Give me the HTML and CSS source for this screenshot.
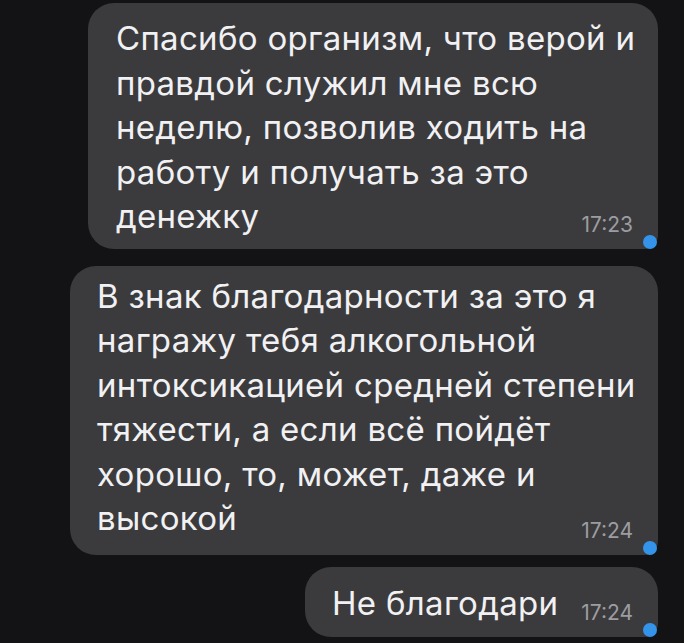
FILE: index.html
```html
<!DOCTYPE html>
<html lang="ru">
<head>
    <meta charset="UTF-8">
    <meta name="viewport" content="width=device-width, initial-scale=1.0">
    <title>Сообщения</title>
    <link rel="stylesheet" href="styles.css">
</head>
<body>
    <div id="chat">
        <div class="bubble first">
            <p class="text">Спасибо организм, что верой и правдой служил мне всю неделю, позволив ходить на работу и получать за это денежку</p>
            <span class="time">17:23</span>
            <span class="dot"></span>
        </div>
        <div class="bubble second">
            <p class="text">В знак благодарности за это я награжу тебя алкогольной интоксикацией средней степени тяжести, а если всё пойдёт хорошо, то, может, даже и высокой</p>
            <span class="time">17:24</span>
            <span class="dot"></span>
        </div>
        <div class="bubble third">
            <p class="text">Не благодари</p>
            <span class="time">17:24</span>
            <span class="dot"></span>
        </div>
    </div>
</body>
</html>
```

FILE: styles.css
```css
body {
    font-family: Inter, Roboto, "Liberation Sans", sans-serif;
    background-color: #131315;
    margin: 0;
    height: 643px;
    overflow: hidden;
}

#chat {
    display: flex;
    flex-direction: column;
    align-items: flex-end;
    padding: 3px 26px 0 0;
}

.bubble {
    position: relative;
    background-color: #3b3b3d;
    border-radius: 26px;
    border-bottom-right-radius: 14px;
    box-sizing: border-box;
}

.bubble.first {
    width: 570px;
    padding: 13px 12px 10px 28px;
}

.bubble.second {
    width: 588px;
    margin-top: 17px;
    padding: 8px 12px 14px 27px;
}

.bubble.third {
    width: 353px;
    margin-top: 12px;
    padding: 14px 90px 12px 27px;
}

.text {
    margin: 0;
    color: #f1f1f3;
    font-size: 33px;
    line-height: 44.5px;
    letter-spacing: 0.3px;
}

.time {
    position: absolute;
    right: 25px;
    bottom: 14px;
    color: #9d9da1;
    font-size: 21px;
    line-height: 21px;
}

.dot {
    position: absolute;
    right: 1px;
    bottom: 0;
    width: 14px;
    height: 14px;
    border-radius: 50%;
    background-color: #3494ea;
}
```
